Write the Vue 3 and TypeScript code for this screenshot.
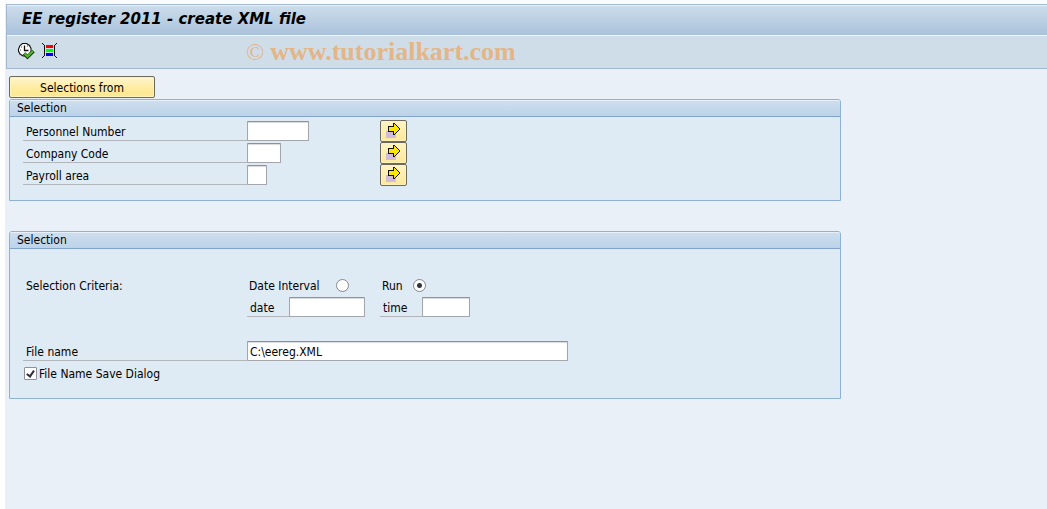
<script setup lang="ts">
import { ref } from 'vue'

interface RangeField {
  id: string
  label: string
  size: string
}

const rangeFields: RangeField[] = [
  { id: 'personnel', label: 'Personnel Number', size: 'w-pernr' },
  { id: 'company', label: 'Company Code', size: 'w-code' },
  { id: 'payroll', label: 'Payroll area', size: 'w-area' },
]

const ranges = ref<Record<string, string>>({ personnel: '', company: '', payroll: '' })
const mode = ref<'interval' | 'run'>('run')
const runDate = ref('')
const runTime = ref('')
const fileName = ref('C:\\eereg.XML')
const saveDialog = ref(true)
</script>

<template>
  <div class="window">
    <header class="head">
      <h1 class="title">EE register 2011 - create XML file</h1>
      <div class="toolbar">
        <button class="tool" type="button" aria-label="Execute">
          <svg width="18" height="18" viewBox="0 0 18 18">
            <path d="M5.5.5h4l3 2 1.500 3v3l-2 3-3 1.500h-3l-3-2-1.500-3v-2l1.500-3.500z" fill="#fff" stroke="#111" stroke-width="1.100" />
            <path d="M7.500 2.500v5h4" fill="none" stroke="#111" stroke-width="1.300" />
            <path d="M3 7h1M7 11h1M4 4h1M10 3h1" stroke="#555" />
            <path d="M7 10.500l3.500 3.500 6-6" fill="none" stroke="#173d0c" stroke-width="3.600" />
            <path d="M7.500 10.500l3 3 5.500-5.500" fill="none" stroke="#5cb531" stroke-width="2" />
          </svg>
        </button>
        <button class="tool" type="button" aria-label="Get variant">
          <svg width="16" height="16" viewBox="0 0 16 16" shape-rendering="crispEdges">
            <path d="M4 2h7v3H4z" fill="#f00" />
            <path d="M4 6h7v3H4z" fill="#0f0" />
            <path d="M4 10h7v3H4z" fill="#00f" />
            <path d="M0 0h1v1H0zM1 1h1v1H1zM2 2h1v11H2zM1 13h1v1H1zM0 14h1v1H0zM14 0h1v1h-1zM13 1h1v1h-1zM12 2h1v11h-1zM13 13h1v1h-1zM14 14h1v1h-1z" fill="#111" />
          </svg>
        </button>
        <span class="mark">© <b>www.tutorialkart.com</b></span>
      </div>
    </header>

    <main class="content">
      <button class="push" type="button">Selections from</button>

      <section class="panel">
        <h2 class="panel-title">Selection</h2>
        <div class="rows">
          <div v-for="f in rangeFields" :key="f.id" class="row">
            <label class="name lined" :for="f.id">{{ f.label }}</label>
            <div class="cell">
              <input :id="f.id" v-model="ranges[f.id]" :class="['field', f.size]" type="text" />
            </div>
            <button class="more" type="button" :aria-label="'Multiple selection for ' + f.label">
              <svg width="15" height="16" viewBox="0 0 15 16" shape-rendering="crispEdges">
                <path d="M0 8h10v7H0z" fill="#d0bddd" />
                <path d="M2 3h5V0h2v1h1v1h1v1h1v1h1v1h1v2h-1v1h-1v1h-1v1h-1v1h-1v1H7V9H2z" fill="#111" />
                <path d="M3 4h5V1h1v1h1v1h1v1h1v1h1v2h-1v1h-1v1h-1v1H9v1H8V8H3z" fill="#ffe600" />
              </svg>
            </button>
          </div>
        </div>
      </section>

      <section class="panel second">
        <h2 class="panel-title">Selection</h2>
        <div class="rows spaced">
          <div class="row">
            <span class="name plain">Selection Criteria:</span>
            <div class="cell option">
              <label class="option-name first plain" for="interval">Date Interval</label>
              <input id="interval" v-model="mode" class="radio" type="radio" name="mode" value="interval" />
            </div>
            <div class="option">
              <label class="option-name plain" for="run">Run</label>
              <input id="run" v-model="mode" class="radio" type="radio" name="mode" value="run" />
            </div>
          </div>
          <div class="row">
            <span class="name"></span>
            <div class="cell">
              <label class="lined short" for="date">date</label>
              <input id="date" v-model="runDate" class="field w-date" type="text" />
            </div>
            <div class="cell">
              <label class="lined short" for="time">time</label>
              <input id="time" v-model="runTime" class="field w-time" type="text" />
            </div>
          </div>
          <div class="row file">
            <label class="name lined" for="file">File name</label>
            <input id="file" v-model="fileName" class="field w-file" type="text" />
          </div>
          <div class="row">
            <label class="tick">
              <input v-model="saveDialog" class="box" type="checkbox" />
              <span class="plain">File Name Save Dialog</span>
            </label>
          </div>
        </div>
      </section>
    </main>
  </div>
</template>

<style>
body {
  margin: 0;
  background: #fff;
}
</style>

<style scoped>
* {
  box-sizing: border-box;
}
.window {
  min-height: 100vh;
  margin-left: 5px;
  padding-top: 4px;
  background: linear-gradient(#fafbfd 4px, #e9f0f7 4px);
  font: 12px/16px "DejaVu Sans Condensed", "DejaVu Sans", sans-serif;
  color: #000;
}
.head {
  border: 1px solid #a3b7d0;
  border-right: 0;
  margin-left: 1px;
}
.title {
  margin: 0;
  height: 30px;
  padding-left: 15px;
  border-top: 1px solid #e8f1f8;
  background: linear-gradient(#cbddeb, #abc2dc);
  font-family: "DejaVu Sans", sans-serif;
  font-size: 15px;
  line-height: 26px;
  font-style: italic;
  font-weight: bold;
  white-space: nowrap;
}
.toolbar {
  display: flex;
  align-items: center;
  height: 33px;
  padding: 0 10px;
  border-top: 1px solid #edf4fa;
  background: #cfdde8;
}
.tool {
  display: flex;
  width: 18px;
  height: 18px;
  margin-right: 7px;
  padding: 0;
  border: 0;
  background: none;
}
.mark {
  margin-left: 179px;
  color: #e3b587;
  font: 24px/30px "Liberation Serif", serif;
  white-space: nowrap;
}
.mark b {
  font-size: 26px;
}
.content {
  padding: 7px 4px 0;
}
.push {
  display: block;
  width: 146px;
  height: 22px;
  padding: 2px 0 0;
  border: 1px solid #6d6a5c;
  border-radius: 2px;
  background: linear-gradient(#fff7cf, #feeb9c 60%, #fce88f);
  box-shadow: inset 0 0 0 1px #fff3bd;
  font: inherit;
  color: #000;
}
.panel {
  max-width: 832px;
  margin-top: 1px;
  border: 1px solid #8fb1d3;
  border-radius: 3px 3px 0 0;
  background: #deeaf4;
}
.panel.second {
  margin-top: 30px;
}
.panel-title {
  margin: 0;
  height: 17px;
  padding-left: 7px;
  border-top: 1px solid #e6f0f8;
  border-bottom: 1px solid #84a3c8;
  border-radius: 2px 2px 0 0;
  background: linear-gradient(#cddeee, #bdd3e8);
  font-size: 12px;
  line-height: 14px;
  font-weight: normal;
}
.rows {
  padding: 3px 13px 14px;
}
.rows.spaced {
  padding-top: 25px;
}
.row {
  display: flex;
  align-items: center;
  height: 22px;
}
.row.file {
  margin-top: 22px;
}
.name {
  flex: none;
  width: 224px;
  padding-left: 3px;
}
.lined {
  height: 20px;
  line-height: 22px;
  border-bottom: 1px solid #b2b6ba;
}
.plain {
  padding-top: 2px;
}
.cell {
  display: flex;
  flex: none;
  width: 133px;
}
.short {
  width: 42px;
  padding-left: 3px;
}
.field {
  height: 20px;
  padding: 2px 2px 0;
  border: 1px solid #a3a6aa;
  border-top-color: #8e9196;
  border-radius: 1px;
  background: #fff;
  box-shadow: inset 0 1px 1px #d9dadd;
  font: inherit;
  color: #000;
  outline: 0;
}
.w-pernr {
  width: 62px;
}
.w-code {
  width: 34px;
}
.w-area {
  width: 20px;
}
.w-date {
  width: 76px;
}
.w-time {
  width: 48px;
}
.w-file {
  width: 321px;
}
.more {
  display: flex;
  justify-content: center;
  width: 27px;
  height: 22px;
  padding: 2px 0 0;
  border: 1px solid #6d6a5c;
  border-radius: 2px;
  background: linear-gradient(#fff4c4, #fde99a);
  box-shadow: inset 0 0 0 1px #fff3bd;
}
.option {
  display: flex;
  align-items: center;
  padding-left: 2px;
}
.option-name {
  width: 31px;
}
.option-name.first {
  width: 87px;
}
.radio {
  appearance: none;
  width: 13px;
  height: 13px;
  margin: 0;
  border: 1px solid #85888d;
  border-radius: 50%;
  background: #fff;
}
.radio:checked {
  background: radial-gradient(circle, #33343f 2px, #fff 3px);
}
.tick {
  display: flex;
  align-items: center;
  gap: 2px;
  padding-left: 1px;
}
.box {
  appearance: none;
  position: relative;
  width: 13px;
  height: 13px;
  margin: 0;
  border: 1px solid #8e9196;
  border-radius: 1px;
  background: #fff;
}
.box:checked::after {
  content: "";
  position: absolute;
  left: 3px;
  top: 1px;
  width: 3px;
  height: 6px;
  border: solid #2d2d3c;
  border-width: 0 2px 2px 0;
  transform: rotate(35deg);
}
</style>
